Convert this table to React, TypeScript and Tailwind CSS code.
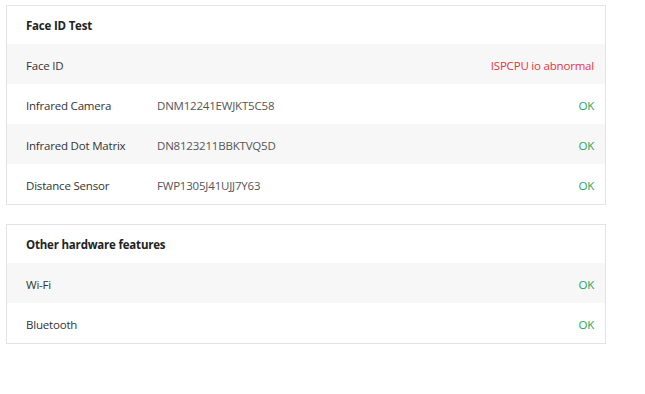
const faceRows = [
  { label: "Face ID", serial: "", status: "ISPCPU io abnormal", ok: false },
  { label: "Infrared Camera", serial: "DNM12241EWJKT5C58", status: "OK", ok: true },
  { label: "Infrared Dot Matrix", serial: "DN8123211BBKTVQ5D", status: "OK", ok: true },
  { label: "Distance Sensor", serial: "FWP1305J41UJJ7Y63", status: "OK", ok: true },
]

const otherRows = [
  { label: "Wi-Fi", serial: "", status: "OK", ok: true },
  { label: "Bluetooth", serial: "", status: "OK", ok: true },
]

type Row = { label: string; serial: string; status: string; ok: boolean }

function Section({ title, rows }: { title: string; rows: Row[] }) {
  return (
    <div className="w-[600px] border border-[#e3e3e3] bg-white">
      <div className="flex h-[38px] items-center pl-[19px] pt-[2px] text-[11.5px] font-bold text-[#222]">{title}</div>
      {rows.map((r, i) => (
        <div
          key={r.label}
          className={`flex h-[40px] items-center pl-[19px] pr-[11px] pt-[3px] text-[11.5px] ${i % 2 === 0 ? "bg-[#f7f7f7]" : "bg-white"}`}
        >
          <span className="w-[131px] text-[#333]">{r.label}</span>
          <span className="flex-1 text-[#555]">{r.serial}</span>
          <span className={r.ok ? "text-[#27a658]" : "text-[#e8333d]"}>{r.status}</span>
        </div>
      ))}
    </div>
  )
}

export default function App() {
  return (
    <div className="flex h-[394px] w-[645px] flex-col gap-[19px] bg-white pl-[6px] pt-[5px] font-['Open_Sans',sans-serif] tracking-[-0.2px]">
      <Section title="Face ID Test" rows={faceRows} />
      <Section title="Other hardware features" rows={otherRows} />
    </div>
  )
}
